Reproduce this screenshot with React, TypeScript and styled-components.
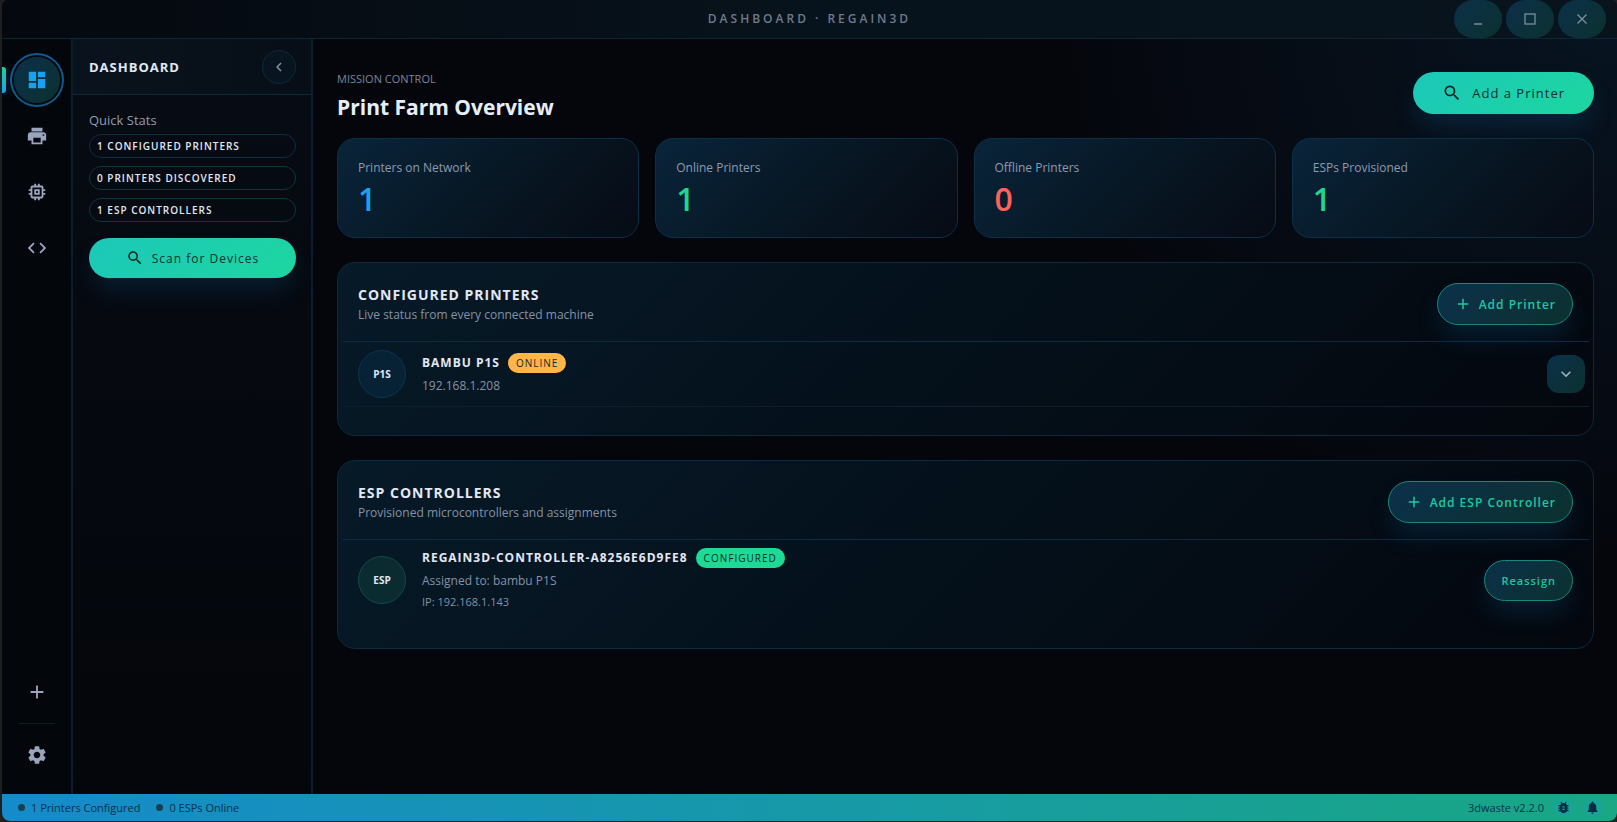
import React from 'react';
import styled, { createGlobalStyle, css } from 'styled-components';
import { MdAdd, MdBugReport, MdChevronLeft, MdCode, MdDashboard, MdExpandMore, MdMemory, MdNotifications, MdPrint, MdSearch, MdSettings } from 'react-icons/md';

const GlobalStyle = createGlobalStyle`
  *, *::before, *::after { box-sizing: border-box; }
  html, body, #root { height: 100%; }
  body {
    margin: 0;
    background: #1f1f1f;
    color: #e2e8f5;
    font-family: "Open Sans", "Noto Sans", sans-serif;
    font-size: 12px;
    line-height: 20px;
  }
  button { font-family: inherit; cursor: pointer; padding: 0; border: 0; }
  h1, h2, h3, p, ul, dl, dd { margin: 0; padding: 0; font-weight: inherit; }
  ul { list-style: none; }
`;

const Backdrop = styled.div`
  height: 100%;
  min-height: 680px;
  padding: 0 0 1px 2px;
  display: flex;
`;

const Window = styled.div`
  flex: 1;
  min-width: 0;
  display: flex;
  flex-direction: column;
  overflow: hidden;
  border-radius: 6px 6px 8px 8px;
  background:
    radial-gradient(circle at 100% 0%, rgba(16, 70, 110, 0.22), transparent 32%),
    #05060c;
`;

const TitleBar = styled.header`
  position: relative;
  display: flex;
  align-items: center;
  justify-content: center;
  height: 39px;
  flex: none;
  border-bottom: 1px solid #0b2639;
  background: linear-gradient(90deg, #05080f 0%, #07131c 50%, #08131c 100%);
`;

const WindowTitle = styled.h1`
  font-size: 12px;
  font-weight: 600;
  letter-spacing: 3px;
  color: #707a8b;
`;

const WindowControls = styled.div`
  position: absolute;
  top: 0;
  right: 11px;
  display: flex;
  gap: 4px;
`;

const tealFill = css`
  background: linear-gradient(135deg, #0b304a 0%, #0c312f 100%);
`;

const glow = css`
  box-shadow: 0 14px 26px -4px rgba(18, 110, 170, 0.24);
`;

const WindowButton = styled.button`
  ${tealFill}
  width: 48px;
  height: 38px;
  border-radius: 20px;
  color: #7c8e9d;
  display: grid;
  place-items: center;
`;

const Workspace = styled.div`
  flex: 1;
  min-height: 0;
  display: flex;
`;

const ActivityBar = styled.nav`
  width: 71px;
  flex: none;
  display: flex;
  flex-direction: column;
  align-items: center;
  justify-content: space-between;
  padding: 18px 0 16px;
  border-right: 2px solid #08202c;
  background: #03060b;
`;

const ActivityGroup = styled.div<{ $gap: number }>`
  width: 100%;
  display: flex;
  flex-direction: column;
  align-items: center;
  gap: ${({ $gap }) => $gap}px;
`;

const ActivityButton = styled.button<{ $active?: boolean }>`
  position: relative;
  width: 46px;
  height: 46px;
  border-radius: 50%;
  display: grid;
  place-items: center;
  background: transparent;
  color: #9aa5bd;
  font-size: 22px;
  ${({ $active }) => $active && css`
    ${tealFill}
    color: #1aa0f0;
    box-shadow: 0 0 0 2px #04080e, 0 0 0 4px #10598a;
    &::before {
      content: "";
      position: absolute;
      left: -12px;
      top: 10px;
      width: 4px;
      height: 26px;
      border-radius: 0 3px 3px 0;
      background: linear-gradient(#1dd1a1, #1aa0f0);
      box-shadow: 0 0 12px rgba(26, 160, 240, 0.4);
    }
  `}
`;

const ActivityDivider = styled.hr`
  width: 36px;
  height: 1px;
  margin: 0;
  border: 0;
  background: #0b1d2a;
`;

const Sidebar = styled.aside`
  width: 240px;
  flex: none;
  display: flex;
  flex-direction: column;
  border-right: 2px solid #08202c;
  background: linear-gradient(#070b13, #04060b);
`;

const SidebarHeader = styled.div`
  display: flex;
  align-items: center;
  justify-content: space-between;
  height: 56px;
  padding: 0 15px 0 16px;
  border-bottom: 1px solid #0b2a3c;
  background: linear-gradient(90deg, #0a131d, #070e17);
`;

const SidebarTitle = styled.h2`
  font-size: 13px;
  font-weight: 700;
  letter-spacing: 1px;
`;

const CollapseButton = styled.button`
  width: 34px;
  height: 34px;
  border: 1px solid #0c2a40;
  border-radius: 50%;
  background: #081420;
  color: #8791a4;
  font-size: 18px;
  display: grid;
  place-items: center;
`;

const SidebarBody = styled.div`
  display: flex;
  flex-direction: column;
  padding: 15px 15px 16px 16px;
`;

const SidebarLabel = styled.h3`
  margin-bottom: 4px;
  font-size: 13px;
  color: #929db2;
`;

const ChipList = styled.ul`
  display: flex;
  flex-direction: column;
  gap: 8px;
  margin-bottom: 16px;
`;

const Chip = styled.li<{ $tone: string }>`
  height: 24px;
  padding: 0 7px;
  border: 1px solid ${({ $tone }) => $tone};
  border-radius: 12px;
  font-size: 10px;
  font-weight: 600;
  line-height: 22px;
  letter-spacing: 1px;
`;

const PrimaryButton = styled.button<{ $compact?: boolean }>`
  ${glow}
  display: flex;
  align-items: center;
  justify-content: center;
  gap: ${({ $compact }) => ($compact ? 8 : 10)}px;
  height: ${({ $compact }) => ($compact ? 40 : 42)}px;
  padding: 0 ${({ $compact }) => ($compact ? 16 : 29)}px;
  border-radius: 21px;
  background: linear-gradient(135deg, #1cc8b9, #1dd6a0);
  color: #06322f;
  font-size: ${({ $compact }) => ($compact ? 12 : 13)}px;
  letter-spacing: 1px;
  svg { font-size: ${({ $compact }) => ($compact ? 18 : 20)}px; color: #04201f; }
`;

const Main = styled.main`
  flex: 1;
  min-width: 0;
  display: flex;
  flex-direction: column;
  gap: 24px;
  padding: 29px 23px 24px 24px;
`;

const PageTop = styled.div`
  display: flex;
  flex-direction: column;
  gap: 15px;
`;

const PageHeader = styled.div`
  display: flex;
  align-items: flex-start;
  justify-content: space-between;
  height: 55px;
  padding-top: 4px;
`;

const Eyebrow = styled.p`
  font-size: 11px;
  line-height: 14px;
  color: #7b8597;
`;

const PageTitle = styled.h2`
  font-size: 21px;
  line-height: 30px;
  margin-top: 6px;
  font-weight: 700;
  color: #e6eefb;
`;

const StatGrid = styled.dl`
  display: grid;
  grid-template-columns: repeat(4, 1fr);
  gap: 16px;
`;

const StatCard = styled.div`
  height: 100px;
  padding: 19px 20px;
  border: 1px solid #0b3047;
  border-radius: 18px;
  background: linear-gradient(135deg, #09243a 0%, #071622 55%, #070b15 100%);
`;

const StatLabel = styled.dt`
  color: #8f9ab0;
`;

const StatValue = styled.dd<{ $color: string }>`
  font-size: 32px;
  font-weight: 600;
  line-height: 42px;
  color: ${({ $color }) => $color};
`;

const Panel = styled.section`
  padding: 4px 4px 28px;
  border: 1px solid #0a2a3d;
  border-radius: 18px;
  background: linear-gradient(135deg, #071a28 0%, #04101a 50%, #04070e 100%);
`;

const PanelHeader = styled.div`
  display: flex;
  align-items: center;
  justify-content: space-between;
  padding: 16px;
  border-bottom: 1px solid #0a2b42;
`;

const PanelTitle = styled.h3`
  padding-top: 2px;
  font-size: 14px;
  font-weight: 700;
  letter-spacing: 1px;
`;

const Muted = styled.p`
  color: #8592a8;
`;

const OutlineButton = styled.button<{ $small?: boolean }>`
  ${tealFill}
  ${glow}
  display: flex;
  align-items: center;
  gap: 7px;
  height: ${({ $small }) => ($small ? 41 : 42)}px;
  padding: 0 16px;
  border: 1px solid #158a74;
  border-radius: 21px;
  color: #1cc8a2;
  font-size: ${({ $small }) => ($small ? 11 : 12)}px;
  font-weight: 600;
  letter-spacing: 1px;
  svg { font-size: 18px; }
`;

const DeviceRow = styled.li<{ $divided?: boolean; $tight?: boolean }>`
  display: flex;
  align-items: center;
  gap: 16px;
  padding: 8px ${({ $tight }) => ($tight ? 4 : 16)}px 8px 16px;
  border-bottom: ${({ $divided }) => ($divided ? '1px solid #0a2030' : '0')};
`;

const Avatar = styled.div<{ $esp?: boolean }>`
  width: 48px;
  height: 48px;
  flex: none;
  display: grid;
  place-items: center;
  border: 1px solid ${({ $esp }) => ($esp ? '#0d4a48' : '#0b344d')};
  border-radius: 50%;
  background: ${({ $esp }) => ($esp ? '#0a2c31' : '#082235')};
  font-size: 10px;
  font-weight: 700;
`;

const DeviceInfo = styled.div`
  flex: 1;
  min-width: 0;
`;

const DeviceName = styled.h4`
  display: flex;
  align-items: center;
  gap: 8px;
  margin: 0 0 2px;
  font-size: 12px;
  font-weight: 700;
  letter-spacing: 1px;
`;

const DeviceMeta = styled.p<{ $small?: boolean }>`
  font-size: ${({ $small }) => ($small ? 11 : 12)}px;
  line-height: 21px;
  color: #8592a8;
`;

const Badge = styled.span<{ $color: string }>`
  padding: 0 8px;
  border-radius: 10px;
  background: ${({ $color }) => $color};
  color: #0a2c2c;
  font-size: 10px;
  font-weight: 400;
  letter-spacing: 1px;
`;

const ExpandButton = styled.button`
  ${tealFill}
  width: 38px;
  height: 38px;
  border-radius: 12px;
  color: #a3adc2;
  font-size: 20px;
  display: grid;
  place-items: center;
`;

const StatusBar = styled.footer`
  display: flex;
  align-items: center;
  justify-content: space-between;
  height: 27px;
  flex: none;
  padding: 0 15px 0 16px;
  background: linear-gradient(90deg, #158bcb, #19a784);
  color: #06324a;
  font-size: 11px;
`;

const StatusGroup = styled.div<{ $gap: number }>`
  display: flex;
  align-items: center;
  gap: ${({ $gap }) => $gap}px;
`;

const StatusItem = styled.span`
  display: flex;
  align-items: center;
  gap: 6px;
  &::before {
    content: "";
    width: 7px;
    height: 7px;
    border-radius: 50%;
    background: #17404f;
  }
`;

const StatusButton = styled.button`
  width: 19px;
  height: 19px;
  border-radius: 50%;
  display: grid;
  place-items: center;
  background: #18a598;
  color: #052c40;
  font-size: 15px;
`;

const stats = [
  { label: 'Printers on Network', value: 1, color: '#1aa0f0' },
  { label: 'Online Printers', value: 1, color: '#1dd690' },
  { label: 'Offline Printers', value: 0, color: '#ff6259' },
  { label: 'ESPs Provisioned', value: 1, color: '#1dd690' },
];

export default function App() {
  return (
    <Backdrop>
      <GlobalStyle />
      <Window>
        <TitleBar>
          <WindowTitle>DASHBOARD · REGAIN3D</WindowTitle>
          <WindowControls>
            <WindowButton aria-label="Minimize">
              <svg width="12" height="12"><path d="M2 11h8" stroke="currentColor" strokeWidth="1.5" /></svg>
            </WindowButton>
            <WindowButton aria-label="Maximize">
              <svg width="12" height="12"><rect x="1" y="1" width="10" height="10" fill="none" stroke="currentColor" strokeWidth="1.3" /></svg>
            </WindowButton>
            <WindowButton aria-label="Close">
              <svg width="12" height="12"><path d="M1.5 1.5l9 9m0-9l-9 9" stroke="currentColor" strokeWidth="1.4" /></svg>
            </WindowButton>
          </WindowControls>
        </TitleBar>

        <Workspace>
          <ActivityBar aria-label="Views">
            <ActivityGroup $gap={10}>
              <ActivityButton $active aria-label="Dashboard"><MdDashboard /></ActivityButton>
              <ActivityButton aria-label="Printers"><MdPrint /></ActivityButton>
              <ActivityButton aria-label="Controllers"><MdMemory /></ActivityButton>
              <ActivityButton aria-label="Code"><MdCode /></ActivityButton>
            </ActivityGroup>
            <ActivityGroup $gap={8}>
              <ActivityButton aria-label="Add"><MdAdd /></ActivityButton>
              <ActivityDivider />
              <ActivityButton aria-label="Settings"><MdSettings /></ActivityButton>
            </ActivityGroup>
          </ActivityBar>

          <Sidebar>
            <SidebarHeader>
              <SidebarTitle>DASHBOARD</SidebarTitle>
              <CollapseButton aria-label="Collapse sidebar"><MdChevronLeft /></CollapseButton>
            </SidebarHeader>
            <SidebarBody>
              <SidebarLabel>Quick Stats</SidebarLabel>
              <ChipList>
                <Chip $tone="#0b2e45">1 CONFIGURED PRINTERS</Chip>
                <Chip $tone="#0b3a38">0 PRINTERS DISCOVERED</Chip>
                <Chip $tone="#0b383f">1 ESP CONTROLLERS</Chip>
              </ChipList>
              <PrimaryButton $compact><MdSearch />Scan for Devices</PrimaryButton>
            </SidebarBody>
          </Sidebar>

          <Main>
            <PageTop>
              <PageHeader>
                <div>
                  <Eyebrow>MISSION CONTROL</Eyebrow>
                  <PageTitle>Print Farm Overview</PageTitle>
                </div>
                <PrimaryButton><MdSearch />Add a Printer</PrimaryButton>
              </PageHeader>
              <StatGrid>
                {stats.map((s) => (
                  <StatCard key={s.label}>
                    <StatLabel>{s.label}</StatLabel>
                    <StatValue $color={s.color}>{s.value}</StatValue>
                  </StatCard>
                ))}
              </StatGrid>
            </PageTop>

            <Panel>
              <PanelHeader>
                <div>
                  <PanelTitle>CONFIGURED PRINTERS</PanelTitle>
                  <Muted>Live status from every connected machine</Muted>
                </div>
                <OutlineButton><MdAdd />Add Printer</OutlineButton>
              </PanelHeader>
              <ul>
                <DeviceRow $divided $tight>
                  <Avatar>P1S</Avatar>
                  <DeviceInfo>
                    <DeviceName>BAMBU P1S<Badge $color="#ffb547">ONLINE</Badge></DeviceName>
                    <DeviceMeta>192.168.1.208</DeviceMeta>
                  </DeviceInfo>
                  <ExpandButton aria-label="Show details"><MdExpandMore /></ExpandButton>
                </DeviceRow>
              </ul>
            </Panel>

            <Panel>
              <PanelHeader>
                <div>
                  <PanelTitle>ESP CONTROLLERS</PanelTitle>
                  <Muted>Provisioned microcontrollers and assignments</Muted>
                </div>
                <OutlineButton><MdAdd />Add ESP Controller</OutlineButton>
              </PanelHeader>
              <ul>
                <DeviceRow>
                  <Avatar $esp>ESP</Avatar>
                  <DeviceInfo>
                    <DeviceName>REGAIN3D-CONTROLLER-A8256E6D9FE8<Badge $color="#1ddb94">CONFIGURED</Badge></DeviceName>
                    <DeviceMeta>Assigned to: bambu P1S</DeviceMeta>
                    <DeviceMeta $small>IP: 192.168.1.143</DeviceMeta>
                  </DeviceInfo>
                  <OutlineButton $small>Reassign</OutlineButton>
                </DeviceRow>
              </ul>
            </Panel>
          </Main>
        </Workspace>

        <StatusBar>
          <StatusGroup $gap={16}>
            <StatusItem>1 Printers Configured</StatusItem>
            <StatusItem>0 ESPs Online</StatusItem>
          </StatusGroup>
          <StatusGroup $gap={10}>
            <span>3dwaste v2.2.0</span>
            <StatusButton aria-label="Report a bug"><MdBugReport /></StatusButton>
            <StatusButton aria-label="Notifications"><MdNotifications /></StatusButton>
          </StatusGroup>
        </StatusBar>
      </Window>
    </Backdrop>
  );
}
